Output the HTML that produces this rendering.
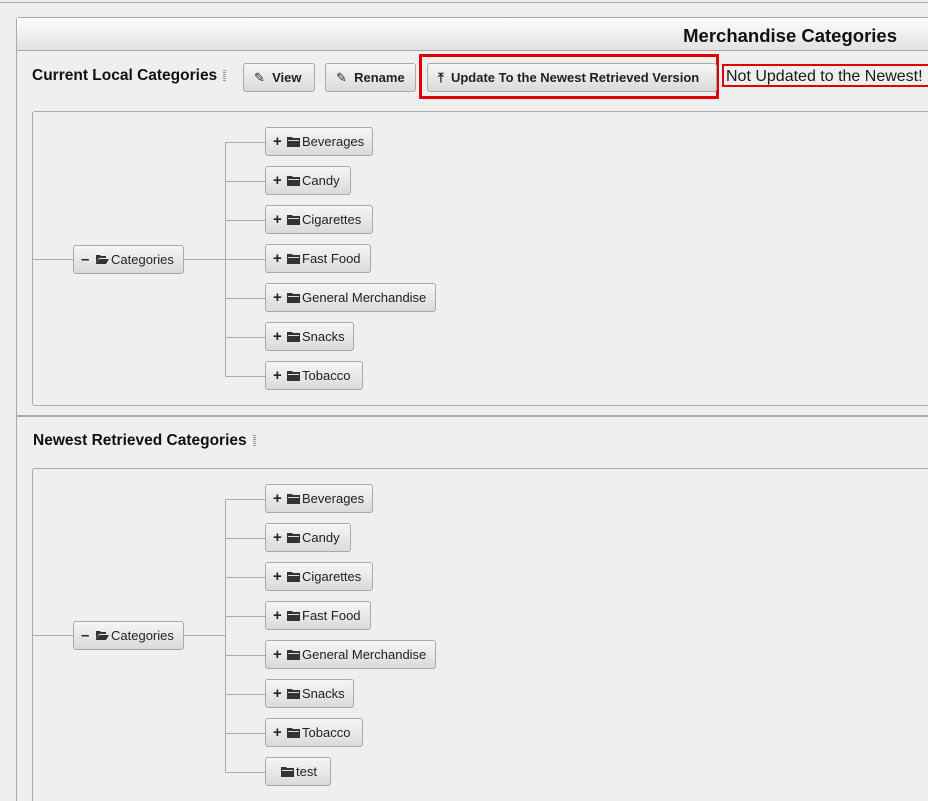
<!DOCTYPE html>
<html style="height:801px;overflow:hidden"><head><meta charset="utf-8"><style>
*{box-sizing:border-box;margin:0;padding:0}
body{width:928px;height:801px;background:#efefef;position:relative;overflow:hidden;font-family:"Liberation Sans","DejaVu Sans",sans-serif;color:#111}
.abs{position:absolute}
.btn{position:absolute;height:29px;border:1px solid #a9a9a9;border-radius:3px;background:linear-gradient(#f6f6f6,#dadada);font-size:13px;line-height:28px;white-space:nowrap;color:#222}
.node{padding-left:7px}
.node b{font-weight:bold;font-size:15px;display:inline-block;width:14px}
.fold{display:inline-block;vertical-align:-1px;margin-right:2px}
.hl{position:absolute;height:1px;background:#aaa}
.vl{position:absolute;width:1px;background:#aaa}
.tb{font-weight:bold;font-size:13px;padding-left:10px}
h2{position:absolute;font-size:15.5px;font-weight:bold;color:#111}
.grip{display:inline-block;width:3px;height:11px;margin-left:6px;vertical-align:-1px;background:repeating-linear-gradient(#999 0 1px,transparent 1px 2px)}
</style></head><body>
<div class="abs" style="left:0;top:2px;width:928px;height:1px;background:#aaa"></div>
<div class="abs" style="left:16px;top:17px;width:912px;height:784px;border-left:1px solid #aaa;border-top:1px solid #aaa;border-radius:3px 0 0 0"></div>
<div class="abs" style="left:17px;top:18px;width:911px;height:33px;background:linear-gradient(#fdfdfd,#e2e2e2);border-bottom:1px solid #aaa"></div>
<div class="abs" style="right:31px;top:25px;font-size:18.5px;font-weight:bold">Merchandise Categories</div>

<h2 style="left:32px;top:67px">Current Local Categories<span class="grip"></span></h2>
<div class="btn tb" style="left:243px;top:63px;width:72px">&#9998;&nbsp; View</div>
<div class="btn tb" style="left:325px;top:63px;width:91px">&#9998;&nbsp; Rename</div>
<div class="abs" style="left:419px;top:54px;width:300px;height:45px;border:3px solid #e00000"></div>
<div class="btn tb" style="left:427px;top:63px;width:290px;padding-left:10px">&#10514;&nbsp; Update To the Newest Retrieved Version</div>
<div class="abs" style="left:722px;top:64px;width:206px;height:23px;border:2px solid #e00000;border-right:none;font-size:16px;line-height:21px;padding-left:2px;color:#1a1a1a">Not Updated to the Newest!</div>

<div class="abs" style="left:32px;top:111px;width:900px;height:295px;border:1px solid #aaa;border-radius:3px"></div>
<div class="abs" style="left:17px;top:415px;width:911px;height:2px;background:#aaa"></div>
<h2 style="left:33px;top:432px">Newest Retrieved Categories<span class="grip"></span></h2>
<div class="abs" style="left:32px;top:468px;width:900px;height:340px;border:1px solid #aaa;border-radius:3px"></div>

<div id="t"></div>
<script>
function folder(open){return open?'<svg class="fold" width="14" height="11" viewBox="0 0 14 11"><path d="M1 1h4l1 1h5v2H4L1 10z" fill="#333"/><path d="M4 5h10l-3 5H1z" fill="#333"/></svg>':'<svg class="fold" width="13" height="11" viewBox="0 0 13 11"><path d="M0 1h5l1 1h7v9H0z" fill="#333"/><rect x="1" y="4" width="11" height="1" fill="#ddd"/></svg>';}
var items=[["Beverages",108],["Candy",86],["Cigarettes",108],["Fast Food",106],["General Merchandise",171],["Snacks",89],["Tobacco",98]];
var h='';
function tree(top,extra){
 var list=items.slice(); if(extra) list.push(["test",66,1]);
 var n=list.length, first=top+16, last=top+16+(n-1)*39, mid=extra?top+151:top+132;
 list.forEach(function(it,i){var y=top+i*39;
  h+='<div class="hl" style="left:225px;top:'+(y+15)+'px;width:40px"></div>';
  if(it[2]) h+='<div class="btn node" style="left:265px;top:'+y+'px;width:'+it[1]+'px;padding-left:15px">'+folder()+it[0]+'</div>';
  else h+='<div class="btn node" style="left:265px;top:'+y+'px;width:'+it[1]+'px"><b>+</b>'+folder()+it[0]+'</div>';});
 h+='<div class="vl" style="left:225px;top:'+(top+15)+'px;height:'+(last-first+1)+'px"></div>';
 h+='<div class="hl" style="left:33px;top:'+mid+'px;width:192px"></div>';
 h+='<div class="btn node" style="left:73px;top:'+(mid-14)+'px;width:111px"><b>&#8211;</b>'+folder(1)+'Categories</div>';
}
tree(127,false);tree(484,true);
document.getElementById('t').innerHTML=h;
</script>
</body></html>
